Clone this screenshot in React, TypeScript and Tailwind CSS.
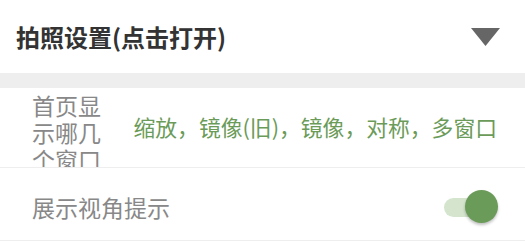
const font = { fontFamily: '"Noto Sans CJK SC", "Noto Sans", sans-serif' };

function Toggle({ on }: { on: boolean }) {
  return (
    <div className="relative w-[54px] h-[34px] flex items-center">
      <div className="w-[46px] h-[19px] rounded-full bg-[#d4e4cd]" />
      {on && (
        <div className="absolute right-0 top-0 w-[33px] h-[33px] rounded-full bg-[#6b9b59] shadow-[0_2px_3px_rgba(0,0,0,0.25)]" />
      )}
    </div>
  );
}

export default function App() {
  return (
    <div className="w-[525px] h-[248px] bg-white overflow-hidden" style={font}>
      <div className="h-[73px] flex items-center justify-between pl-[16px] pr-[25px]">
        <span className="text-[24px] font-bold text-[#333333]">拍照设置(点击打开)</span>
        <svg width="29" height="18" viewBox="0 0 29 18">
          <path d="M0 0 H29 L14.5 18 Z" fill="#666666" />
        </svg>
      </div>
      <div className="h-[15px] bg-[#eeeeee]" />
      <div className="h-[80px] flex items-center pl-[32px] pr-[28px] border-b border-[#eeeeee] overflow-hidden">
        <div className="w-[72px] self-start pt-[4px] text-[23px] leading-[27px] text-[#888888]">
          首页显示哪几个窗口
        </div>
        <div className="flex-1 text-right text-[21.8px] text-[#6b9b59]">缩放，镜像(旧)，镜像，对称，多窗口</div>
      </div>
      <div className="h-[73px] flex items-center justify-between pt-[6px] pl-[32px] pr-[27px] border-b border-[#eeeeee]">
        <span className="text-[23px] text-[#888888]">展示视角提示</span>
        <Toggle on />
      </div>
    </div>
  );
}
